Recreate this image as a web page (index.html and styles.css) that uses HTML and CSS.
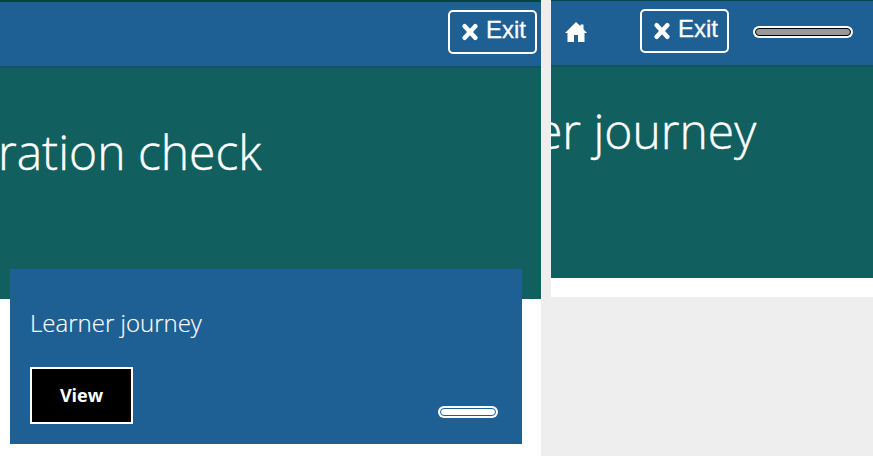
FILE: index.html
```html
<!DOCTYPE html>
<html lang="en">
<head>
<meta charset="utf-8">
<title>Learner journey</title>
<link rel="stylesheet" href="styles.css">
</head>
<body>
<main class="panels">
  <section class="panel panel-left">
    <header class="bar">
      <button class="exit"><svg class="cross" viewBox="0 0 16 18"><path d="M2.7 3.2 13.3 14.8M13.3 3.2 2.7 14.8"/></svg><span>Exit</span></button>
    </header>
    <div class="hero"><h1>ration check</h1></div>
    <article class="card">
      <h2>Learner journey</h2>
      <div class="card-foot">
        <button class="view">View</button>
        <div class="progress"><div class="fill"></div></div>
      </div>
    </article>
  </section>
  <section class="panel panel-right">
    <header class="bar">
      <svg class="home" viewBox="0 0 22 20"><path d="M11 0 15.5 4.2V2.5H18.5V7.2L22 11H19.5V20H13V13H9V20H2.5V11H0Z"/></svg>
      <button class="exit"><svg class="cross" viewBox="0 0 16 18"><path d="M2.7 3.2 13.3 14.8M13.3 3.2 2.7 14.8"/></svg><span>Exit</span></button>
      <div class="progress progress-empty"><div class="fill"></div></div>
    </header>
    <div class="hero"><h1>er journey</h1></div>
  </section>
</main>
</body>
</html>
```
FILE: styles.css
```css
* { box-sizing: border-box; }
body {
  margin: 0;
  height: 456px;
  overflow: hidden;
  background: #eee;
  color: #fff;
  font-family: "Open Sans", sans-serif;
}
.panels { display: flex; align-items: flex-start; gap: 10px; }
.panel { background: #fff; }
.panel-left { width: 541px; height: 456px; }
.panel-right { width: 322px; height: 297px; }
.bar {
  display: flex;
  align-items: flex-start;
  height: 66px;
  background: #1e6093;
  border-top: 2px solid #064349;
}
.panel-left .bar { justify-content: flex-end; padding: 8px 4px 0 0; }
.panel-right .bar { height: 65px; border-top-width: 1px; padding: 8px 0 0 14px; }
.exit {
  display: flex;
  align-items: flex-start;
  width: 89px;
  height: 44px;
  padding: 4px 0 0 12px;
  border: 2px solid #fff;
  border-radius: 5px;
  background: transparent;
  color: #fff;
  font: 24px/28px "Liberation Sans", Arial, sans-serif;
  -webkit-text-stroke: 0.3px #fff;
}
.exit span { margin-left: 8px; }
.cross { width: 16px; height: 18px; margin-top: 7px; fill: none; stroke: #fff; stroke-width: 4.5; stroke-linecap: round; }
.home { width: 22px; height: 20px; margin: 13px 53px 0 0; fill: #fff; }
.hero { background: #125f60; }
.panel-left .hero { height: 233px; padding-top: 52px; border-top: 2px solid #12535f; }
.panel-right .hero { height: 213px; padding-top: 32px; border-top: 2px solid #12535f; overflow: hidden; }
h1 { margin: 0; font-size: 48px; line-height: 64px; font-weight: 300; white-space: nowrap; -webkit-text-stroke: 0.4px #fff; }
.panel-left h1 { margin-left: -2px; }
.panel-right h1 { margin-left: -15px; }
.card {
  position: relative;
  width: 512px;
  height: 175px;
  margin: -30px 0 0 10px;
  padding: 38px 24px 0 20px;
  background: #1e6093;
}
h2 { margin: 0; font-size: 24px; line-height: 32px; font-weight: 300; -webkit-text-stroke: 0.15px #fff; }
.card-foot { display: flex; justify-content: space-between; align-items: flex-start; margin-top: 28px; }
.view {
  width: 103px;
  height: 57px;
  padding: 0 0 2px;
  border: 2px solid #fff;
  background: #000;
  color: #fff;
  font: 700 18px/24px "Open Sans", sans-serif;
}
.progress { width: 60px; height: 12px; margin-top: 39px; padding: 2px; border-radius: 6px; background: #fff; }
.fill { height: 8px; border: 1px solid #1e6093; border-radius: 4px; background: #fff; }
.progress-empty { width: 100px; margin: 17px 0 0 24px; }
.progress-empty .fill { border-color: #000; background: #999; }
```
